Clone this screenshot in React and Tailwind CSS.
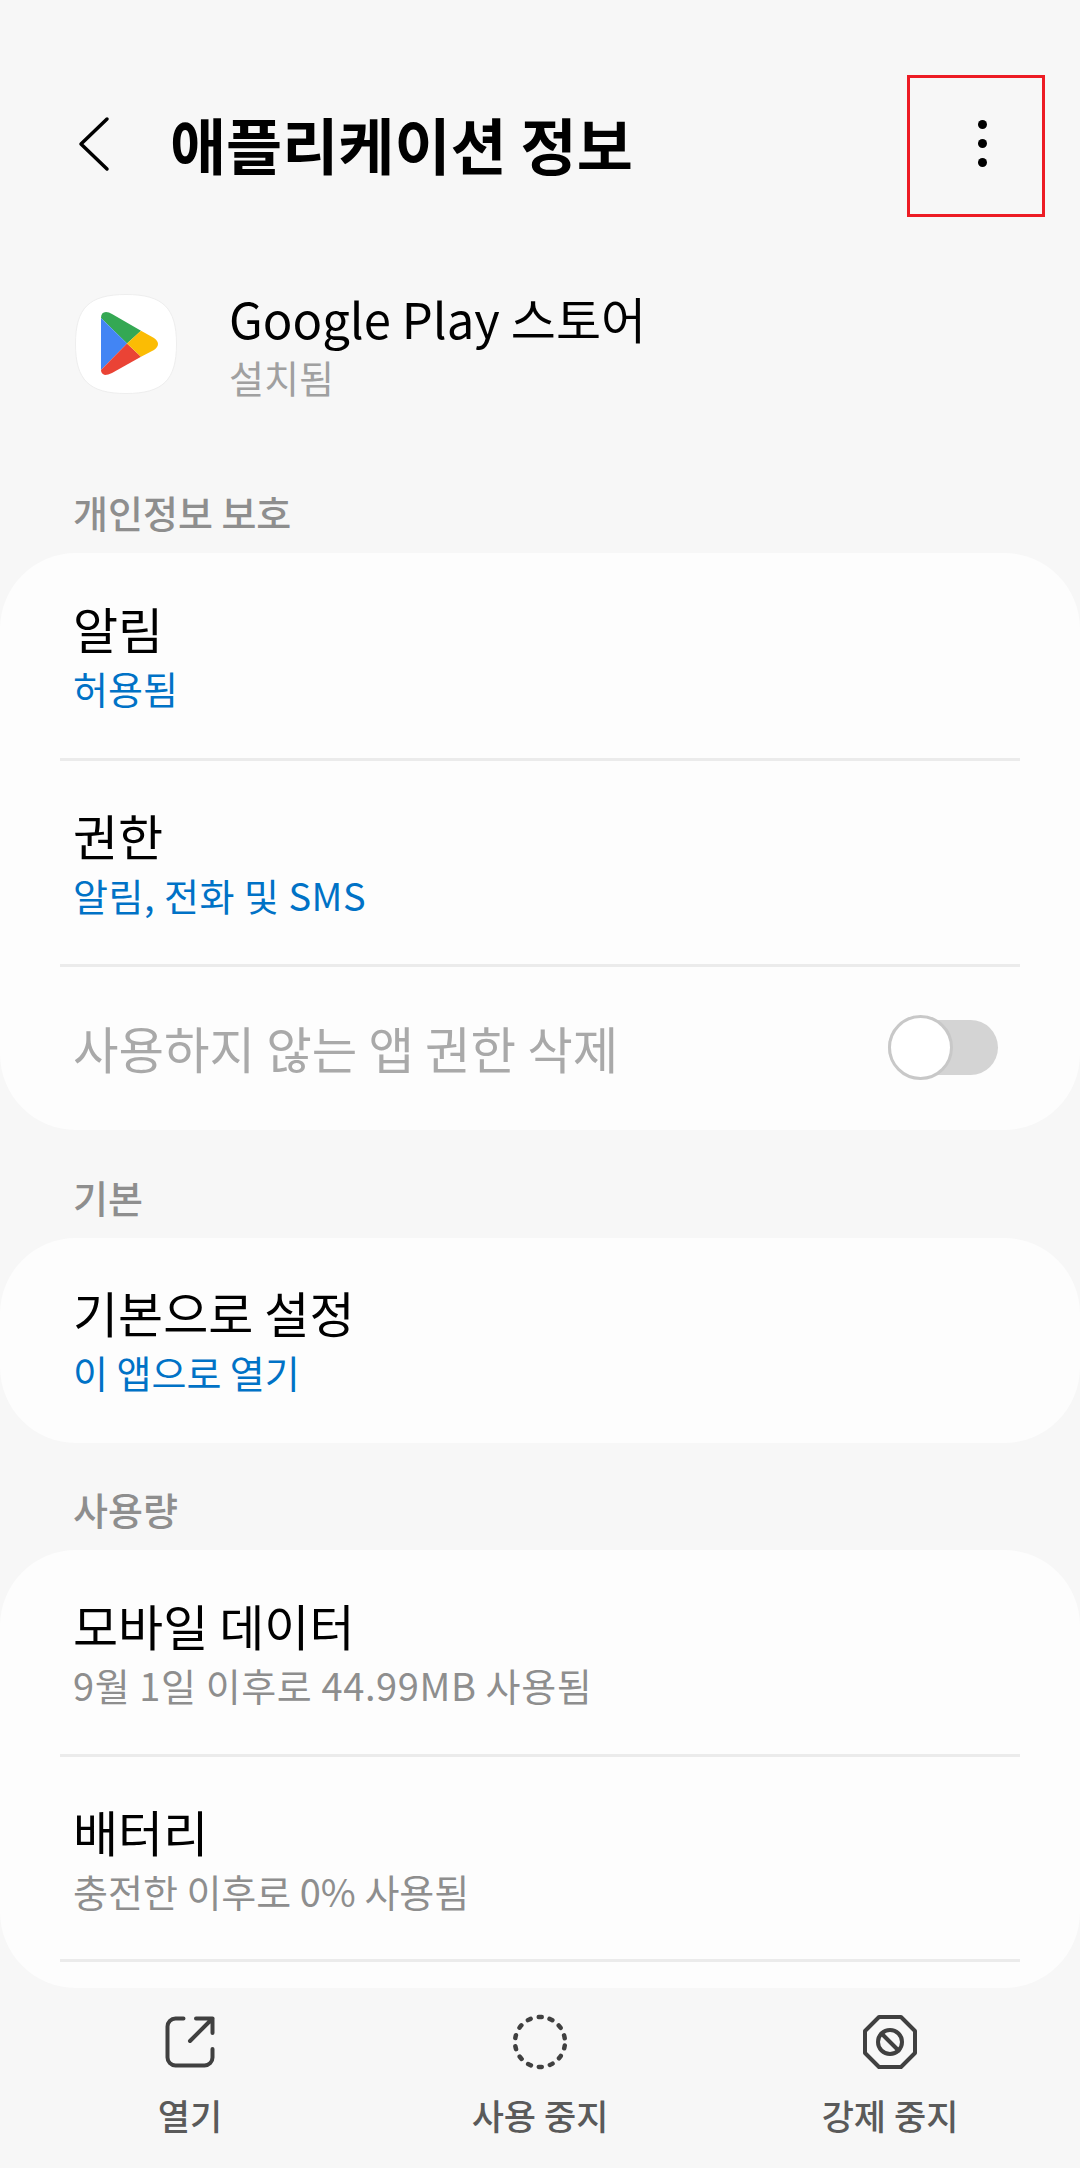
import React from "react";

const FONT = "font-['Noto_Sans_CJK_KR','Noto_Sans',sans-serif]";

const SectionLabel = ({ text, height }) => (
  <div className={`flex items-end px-[73px] pb-[21px] text-[38px] leading-[40px] font-medium text-[#8e8e8e] ${height}`}>
    {text}
  </div>
);

const Row = ({ title, sub, subClass = "text-[#0072c6]", height = "h-[207px]", divider = true }) => (
  <div className={`mx-[60px] flex flex-col justify-center border-b-[3px] border-[#ebebeb] px-[13px] pb-[3px] ${height}`} style={divider ? undefined : { borderBottomColor: "transparent" }}>
    <div className="text-[49px] leading-[62px] text-black">{title}</div>
    <div className={`mt-[6px] text-[38px] leading-[46px] ${subClass}`}>{sub}</div>
  </div>
);

const PlayIcon = () => (
  <svg width="102" height="100" viewBox="0 0 102 100">
    <path d="M51 0.5C88 0.5 101.5 14 101.5 50C101.5 86 88 99.5 51 99.5C14 99.5 0.5 86 0.5 50C0.5 14 14 0.5 51 0.5Z" fill="#ffffff" stroke="#eeeeee" />
    <path d="M26 24Q26 18 31 18Q34 18 37 20L66 36.7L52 49.4Z" fill="#34a853" />
    <path d="M26 24L52 49.4L26 76Z" fill="#4285f4" />
    <path d="M26 76L52 49.4L66 62.7L37 79Q33 81 30 81Q26 80 26 76Z" fill="#ea4335" />
    <path d="M66 36.7L79 44Q83 47 83 50Q83 53 79 56L66 62.7L52 49.4Z" fill="#fbbc04" />
  </svg>
);

const NavItem = ({ label, children }) => (
  <div className="flex flex-col items-center">
    <svg width="60" height="60" viewBox="0 0 60 60" fill="none" stroke="#404040" strokeWidth="4" strokeLinecap="round" strokeLinejoin="round">
      {children}
    </svg>
    <div className="mt-[20px] text-[35px] leading-[46px] font-medium text-[#5a5a5a]">{label}</div>
  </div>
);

export default function App() {
  return (
    <div className={`relative flex h-[2168px] w-[1080px] flex-col overflow-hidden bg-[#f7f7f7] ${FONT}`}>
      {/* top bar */}
      <div className="flex h-[217px] items-center pt-[70px] pl-[78px]">
        <svg width="32" height="56" viewBox="0 0 32 56" fill="none" stroke="#000" strokeWidth="3.5" strokeLinecap="round" strokeLinejoin="round">
          <path d="M29 3L3 28L29 53" />
        </svg>
        <h1 className="ml-[60px] text-[61px] leading-[72px] font-bold text-black">애플리케이션 정보</h1>
        <div className="ml-auto mr-[93px] flex flex-col gap-[10px]">
          <span className="h-[9px] w-[9px] rounded-full bg-black" />
          <span className="h-[9px] w-[9px] rounded-full bg-black" />
          <span className="h-[9px] w-[9px] rounded-full bg-black" />
        </div>
      </div>
      {/* highlight drawn over the screenshot */}
      <div className="absolute left-[907px] top-[75px] h-[142px] w-[138px] border-[3px] border-[#ed1c24]" />

      {/* app */}
      <div className="mt-[70px] flex items-center pl-[75px]">
        <PlayIcon />
        <div className="ml-[52px]">
          <div className="text-[49px] leading-[62px] text-black">Google Play 스토어</div>
          <div className="mt-[5px] text-[38px] leading-[46px] text-[#a0a0a0]">설치됨</div>
        </div>
      </div>

      <SectionLabel text="개인정보 보호" height="h-[153px]" />
      <div className="rounded-[76px] bg-[#fdfdfd]">
        <Row title="알림" sub="허용됨" height="h-[208px]" />
        <Row title="권한" sub="알림, 전화 및 SMS" subClass="text-[#0072c6] tracking-[0.5px]" height="h-[206px]" />
        <div className="flex h-[163px] items-center justify-between pr-[82px] pb-[2px] pl-[73px]">
          <span className="text-[49.5px] leading-[62px] text-[#a9a9a9]">사용하지 않는 앱 권한 삭제</span>
          <div className="relative h-[55px] w-[110px] rounded-full bg-[#d4d4d4]">
            <div className="absolute -top-[5px] left-0 h-[65px] w-[65px] rounded-full border-[3px] border-[#c8c8c8] bg-white" />
          </div>
        </div>
      </div>

      <SectionLabel text="기본" height="h-[108px]" />
      <div className="rounded-[76px] bg-[#fdfdfd]">
        <Row title="기본으로 설정" sub="이 앱으로 열기" height="h-[205px]" divider={false} />
      </div>

      <SectionLabel text="사용량" height="h-[107px]" />
      <div className="rounded-[76px] bg-[#fdfdfd]">
        <Row title="모바일 데이터" sub="9월 1일 이후로 44.99MB 사용됨" subClass="text-[#8e8e8e] tracking-[0.6px]" />
        <Row title="배터리" sub="충전한 이후로 0% 사용됨" subClass="text-[#8e8e8e]" height="h-[205px]" />
        <div className="h-[26px]" />
      </div>

      {/* bottom actions */}
      <div className="mt-[24px] grid grid-cols-3 px-[15px]">
        <NavItem label="열기">
          <path d="M23.5 6.5H15.5a8 8 0 0 0-8 8V45.5a8 8 0 0 0 8 8H44.5a8 8 0 0 0 8-8V37" />
          <path d="M36 6.5H52.5V21M52.5 6.5L30 29" />
        </NavItem>
        <NavItem label="사용 중지">
          <circle cx="30" cy="30" r="25" strokeDasharray="3 8.22" transform="rotate(8 30 30)" strokeWidth="4.5" />
        </NavItem>
        <NavItem label="강제 중지">
          <path d="M19 5H41L55 19V41L41 55H19L5 41V19Z" />
          <circle cx="30" cy="30" r="12" />
          <path d="M21.5 21.5L38.5 38.5" />
        </NavItem>
      </div>
    </div>
  );
}
